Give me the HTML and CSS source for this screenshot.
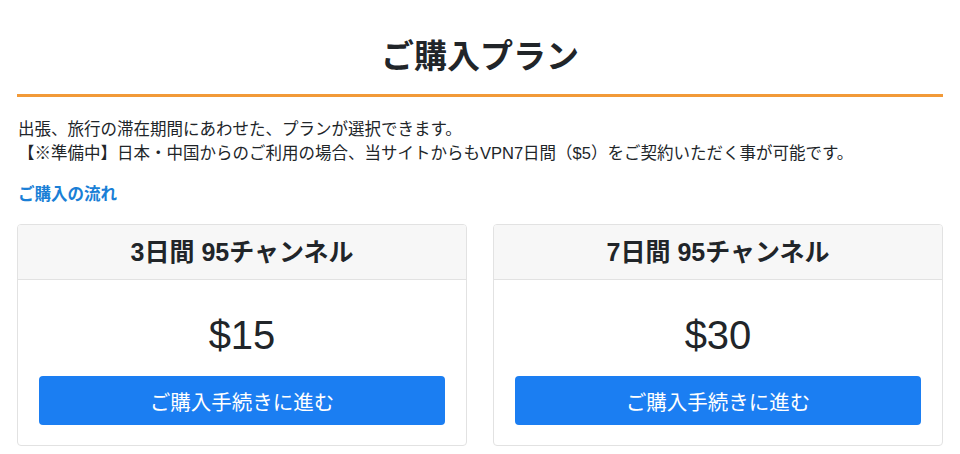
FILE: index.html
```html
<!DOCTYPE html>
<html lang="ja">
<head>
    <meta charset="UTF-8">
    <meta name="viewport" content="width=device-width, initial-scale=1.0">
    <title>ご購入プラン</title>
    <link rel="stylesheet" href="styles.css">
</head>
<body>
    <div class="container">
        <h1 class="page-title">ご購入プラン</h1>

        <p class="lead">
            出張、旅行の滞在期間にあわせた、プランが選択できます。<br>
            【※準備中】日本・中国からのご利用の場合、当サイトからもVPN7日間（$5）をご契約いただく事が可能です。
        </p>

        <a class="flow-link" href="#">ご購入の流れ</a>

        <div class="plans">
            <div class="card">
                <div class="card-header">3日間 95チャンネル</div>
                <div class="card-body">
                    <div class="price">$15</div>
                    <button type="button">ご購入手続きに進む</button>
                </div>
            </div>
            <div class="card">
                <div class="card-header">7日間 95チャンネル</div>
                <div class="card-body">
                    <div class="price">$30</div>
                    <button type="button">ご購入手続きに進む</button>
                </div>
            </div>
        </div>
    </div>
</body>
</html>
```

FILE: styles.css
```css
body {
    margin: 0;
    font-family: "Liberation Sans", "Noto Sans CJK JP", sans-serif;
    color: #212529;
    background: #fff;
}
.container {
    padding: 0 17px;
}
.page-title {
    margin: 38px 0 0;
    padding-bottom: 18px;
    border-bottom: 3px solid #f29a38;
    font-size: 33px;
    line-height: 38px;
    font-weight: bold;
    text-align: center;
}
.lead {
    margin: 20px 0 0;
    padding-left: 1px;
    font-size: 16.5px;
    line-height: 24px;
}
.flow-link {
    display: block;
    margin-top: 17px;
    padding-left: 1px;
    font-size: 16.5px;
    line-height: 24px;
    font-weight: bold;
    color: #1a7fd6;
    text-decoration: none;
}
.plans {
    display: flex;
    gap: 26px;
    margin-top: 18px;
}
.card {
    flex: 1;
    border: 1px solid #e2e2e2;
    border-radius: 4px;
    overflow: hidden;
}
.card-header {
    height: 54px;
    line-height: 54px;
    background: #f7f7f7;
    border-bottom: 1px solid #e2e2e2;
    text-align: center;
    font-size: 25px;
    font-weight: bold;
}
.card-body {
    padding: 31px 21px 20px;
    text-align: center;
}
.price {
    font-size: 40px;
    line-height: 48px;
}
button {
    display: block;
    width: 100%;
    height: 49px;
    margin-top: 17px;
    background-color: #1b7ef2;
    color: #fff;
    border: none;
    border-radius: 4px;
    font-family: "Liberation Sans", "Noto Sans CJK JP", sans-serif;
    font-size: 20.5px;
    cursor: pointer;
}
```
